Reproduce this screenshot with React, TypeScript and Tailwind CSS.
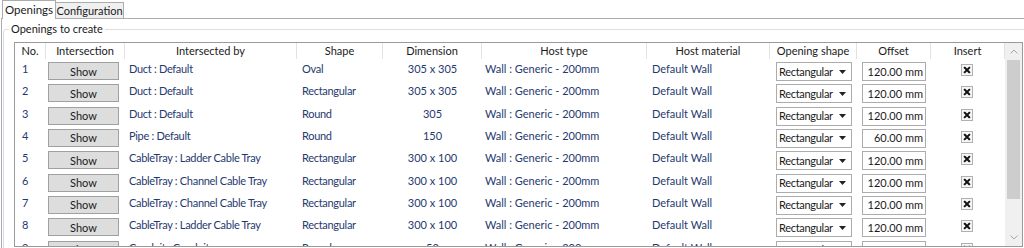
import React from "react";

type Row = {
  no: number;
  by: string;
  shape: string;
  dim: string;
  offset: string;
};

const rows: Row[] = [
  { no: 1, by: "Duct : Default", shape: "Oval", dim: "305 x 305", offset: "120.00 mm" },
  { no: 2, by: "Duct : Default", shape: "Rectangular", dim: "305 x 305", offset: "120.00 mm" },
  { no: 3, by: "Duct : Default", shape: "Round", dim: "305", offset: "120.00 mm" },
  { no: 4, by: "Pipe : Default", shape: "Round", dim: "150", offset: "60.00 mm" },
  { no: 5, by: "CableTray : Ladder Cable Tray", shape: "Rectangular", dim: "300 x 100", offset: "120.00 mm" },
  { no: 6, by: "CableTray : Channel Cable Tray", shape: "Rectangular", dim: "300 x 100", offset: "120.00 mm" },
  { no: 7, by: "CableTray : Channel Cable Tray", shape: "Rectangular", dim: "300 x 100", offset: "120.00 mm" },
  { no: 8, by: "CableTray : Ladder Cable Tray", shape: "Rectangular", dim: "300 x 100", offset: "120.00 mm" },
  { no: 9, by: "Conduit : Conduit", shape: "Round", dim: "52", offset: "40.00 mm" },
];

const cols = "grid grid-cols-[31px_79px_172px_86px_99px_165px_123px_87px_74px_74px]";

const headers = [
  "No.",
  "Intersection",
  "Intersected by",
  "Shape",
  "Dimension",
  "Host type",
  "Host material",
  "Opening shape",
  "Offset",
  "Insert",
];

function CheckBox() {
  return (
    <div className="ml-[30px] mt-[5px] w-[12px] h-[12px] border border-[#b0b0b0] bg-[#f7f7f7] flex items-center justify-center">
      <svg width="8" height="8" viewBox="0 0 8 8">
        <path d="M1.8 1.8 L6.2 6.2 M6.2 1.8 L1.8 6.2" stroke="#111" strokeWidth="2" strokeLinecap="square" />
      </svg>
    </div>
  );
}

function DataRow({ r }: { r: Row }) {
  const txt = "pt-[2px] leading-4 text-[#1f3a70] whitespace-nowrap overflow-hidden";
  return (
    <div className={`${cols} h-[22.33px] shrink-0`}>
      <div className={`${txt} pl-[7px]`}>{r.no}</div>
      <div>
        <div className="ml-[2px] mt-[3px] w-[71px] h-[18px] bg-[#dddddd] border border-[#a0a0a0] flex items-center justify-center text-[#1a1a1a] leading-4 pt-[1px]">
          Show
        </div>
      </div>
      <div className={`${txt} pl-[4px] tracking-[-0.3px]`}>{r.by}</div>
      <div className={`${txt} pl-[5px] tracking-[-0.3px]`}>{r.shape}</div>
      <div className={`${txt} text-center`}>{r.dim}</div>
      <div className={`${txt} pl-[3px]`}>Wall : Generic - 200mm</div>
      <div className={`${txt} pl-[5px]`}>Default Wall</div>
      <div>
        <div className="ml-[6px] mt-[3px] w-[76px] h-[19px] bg-white border border-[#acacac] flex items-center justify-between pl-[2px] pr-[5px] text-[#1a1a1a] leading-4">
          <span className="tracking-[-0.3px]">Rectangular</span>
          <svg width="7" height="4" viewBox="0 0 7 4">
            <path d="M0 0 L7 0 L3.5 4 Z" fill="#222" />
          </svg>
        </div>
      </div>
      <div>
        <div className="ml-[5px] mt-[3px] w-[64px] h-[19px] bg-white border border-[#acacac] flex items-center justify-end pr-[2px] text-[#1a1a1a] leading-4 whitespace-nowrap">
          {r.offset}
        </div>
      </div>
      <div>
        <CheckBox />
      </div>
    </div>
  );
}

export default function App() {
  return (
    <div className="w-[1024px] h-[248px] overflow-hidden bg-white text-[11px] text-[#1a1a1a] font-['Lato',sans-serif]">
      {/* Tabs */}
      <div className="flex items-end h-[18px]">
        <div className="relative z-10 -mb-px ml-[2px] w-[54px] h-[19px] bg-white border border-b-0 border-[#acacac] flex items-center justify-center leading-4 text-[11.5px]">
          Openings
        </div>
        <div className="w-[68px] h-[16px] bg-[#f0f0f0] border-t border-r border-[#acacac] flex items-center justify-center leading-4">
          Configuration
        </div>
      </div>
      {/* Panel */}
      <div className="ml-[1px] w-[1040px] h-[240px] border-t border-l border-[#acacac] bg-white">
        <fieldset className="ml-[1px] mt-[2px] w-[1030px] h-[240px] border border-[#d5dfe5] rounded-[3px] pl-[5px]">
          <legend className="px-[2px] leading-4">Openings to create</legend>
          <div className="ml-[5px] mt-[5px] w-[1009px] h-[205px] border border-[#9a9a9a] flex overflow-hidden">
            <div className="w-[990px] flex flex-col">
              <div className={`${cols} h-[16px] shrink-0`}>
                {headers.map((h) => (
                  <div key={h} className="border-r border-[#e2e2e2] text-center leading-4 whitespace-nowrap">
                    {h}
                  </div>
                ))}
              </div>
              {rows.map((r) => (
                <DataRow key={r.no} r={r} />
              ))}
            </div>
            <div className="w-[17px] shrink-0 bg-[#f0f0f0] flex flex-col items-center">
              <div className="h-[17px] shrink-0 flex items-center justify-center">
                <svg width="8" height="5" viewBox="0 0 8 5">
                  <path d="M0.5 4.5 L4 1 L7.5 4.5" stroke="#a8a8a8" strokeWidth="1" fill="none" />
                </svg>
              </div>
              <div className="w-[13px] h-[139px] shrink-0 bg-[#cdcdcd]" />
              <div className="flex-1" />
              <div className="h-[17px] shrink-0 flex items-center justify-center">
                <svg width="8" height="5" viewBox="0 0 8 5">
                  <path d="M0.5 0.5 L4 4 L7.5 0.5" stroke="#a8a8a8" strokeWidth="1" fill="none" />
                </svg>
              </div>
            </div>
          </div>
        </fieldset>
      </div>
    </div>
  );
}
